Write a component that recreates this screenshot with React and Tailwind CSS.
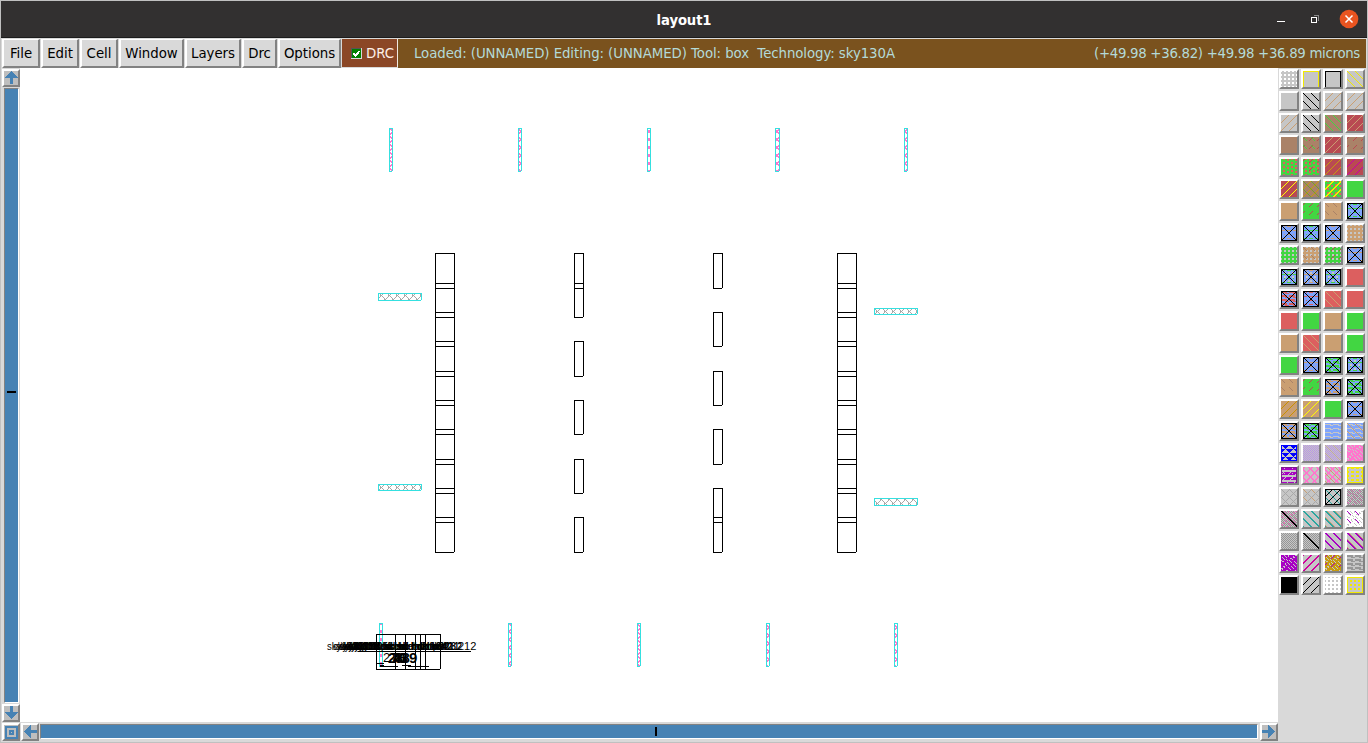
import React from "react";

const G = "#c6c6c6", GR = "#42d642", TAN = "#ca9f72", BR = "#aa8268", RD = "#b94a52", LR = "#dc5f5f", BL = "#7fa4fb", K = "#000", Y = "#f2ea00", W = "#fff", PK = "#ff76cd", PU = "#a800c4", TL = "#2aa7a0", DG = "#969696", MG = "#d0009c", BLU = "#0000ff", GO = "#c69a10";

// Stipple tests over a 16x16 swatch
const P = {
  frame: (x, y) => x < 1 || x > 14 || y < 1 || y > 14,
  open: (x, y) => y < 1 || x < 1 || x > 14,
  back: (x, y) => (x - y + 16) % 8 === 0,
  backC: (x, y) => (x - y + 16) % 8 === 2,
  backB: (x, y) => (x - y + 16) % 8 < 2,
  backDash: (x, y) => (x - y + 16) % 8 === 0 && y % 8 < 4,
  slash: (x, y) => (x + y) % 8 === 7,
  slashB: (x, y) => (x + y) % 8 === 7 || (x + y) % 8 === 0,
  slashDash: (x, y) => (x + y) % 8 === 1 && y % 8 < 4,
  dots: (x, y) => (x + 1) % 4 < 2 && (y + 1) % 4 < 2,
  sdots: (x, y) => x % 4 > 1 && (y + (x % 8 > 3 ? 0 : 1)) % 4 < 2,
  boxx: (x, y) => x < 1 || x > 14 || y < 1 || y > 14 || x === y || x + y === 15 || (x > 6 && x < 9 && y > 6 && y < 9),
  check: (x, y) => (x + y) % 2 === 0,
  wave: (x, y) => (y % 4 === 1 && x % 8 < 6) || (y % 4 === 2 && x % 8 > 4),
  speck: (x, y) => (y % 4 === 1 && x > 2 && x < 13 && x % 6 < 4) || (y % 8 === 5 && (x < 4 || x > 11)),
  waveB: (x, y) => (y % 4 < 2 && x % 8 < 6) || (y % 4 === 2 && x % 8 > 3),
  cross: (x, y) => (x - y + 16) % 8 === 0 || (x + y) % 8 === 0,
  crossB: (x, y) => (x - y + 19) % 8 < 2 || (x + y) % 8 < 2,
  tri: (x, y) => {
    if (y === 0 || y === 15 || x === 0 || x === 15) return true;
    const r = y % 8;
    return r < 4 ? Math.abs((x % 8) - 4) < 4 - r : Math.abs(((x + 4) % 8) - 4) < 8 - r;
  },
  scatter: (x, y) => ((x * 7) ^ (y * 5)) % 8 === 1 || (x * y + x) % 11 === 3,
  frameDots: (x, y) => x < 1 || x > 14 || y < 1 || y > 14 || ((x + 1) % 5 < 3 && y % 4 < 2),
  diag1: (x, y) => x === y || x === y + 1,
  bars: (x, y) => (y % 5 < 3 && !(x % 8 === 3 && y % 5 === 1)) && !(y > 4 && (x + y) % 7 === 0),
};

function pathOf(name) {
  let d = "";
  for (let y = 0; y < 16; y++) {
    let x = 0;
    while (x < 16) {
      if (!P[name](x, y)) { x++; continue; }
      const s = x;
      while (x < 16 && P[name](x, y)) x++;
      d += `M${s} ${y}h${x - s}v1h${s - x}z`;
    }
  }
  return d;
}
const PATHS = Object.fromEntries(Object.keys(P).map((k) => [k, pathOf(k)]));

// Each swatch: background followed by colour/stipple pairs
const cb = (...c) => [BL, ...c, K, "boxx"];
const SWATCHES = [
  [G, W, "dots"], [G, Y, "open"], [G, K, "open"], [G, Y, "back"],
  [G], [G, K, "back"], [G, TAN, "slash"], [G, TAN, "slash"],
  [G, TAN, "slash"], [G, K, "back"], [BR, GR, "back"], [RD, TAN, "slash"],
  [BR], [BR, GR, "backDash", RD, "slashDash"], [RD, TAN, "slash"], [BR, RD, "slashDash"],
  [GR, LR, "sdots"], [GR, LR, "sdots", RD, "slashDash"], [RD, GO, "slash"], [RD, "#c800a8", "slash"],
  [RD, "#ffff00", "slash"], [BR, GO, "slash", "#70a030", "back"], [GR, LR, "sdots", Y, "slashB"], [GR],
  [TAN], [GR, RD, "slashDash"], [TAN, BR, "backDash"], cb(GR, "speck"),
  cb(TAN, "speck"), cb(GR, "speck"), cb(TAN, "speck"), [TAN, G, "dots"],
  [GR, G, "dots"], [TAN, G, "dots", BR, "backDash"], [GR, G, "dots", RD, "slashDash"], cb(TAN, "speck"),
  cb(GR, "speck", G, "dots"), cb(TAN, "speck", G, "dots"), cb(GR, "speck", G, "dots"), [LR],
  cb(LR, "waveB"), cb(LR, "speck"), [LR, TAN, "back"], [LR],
  [LR], [GR], [TAN], [GR],
  [TAN], [LR, TAN, "back"], [TAN], [GR],
  [GR], cb(TAN, "speck"), cb(GR, "waveB"), cb(GR, "speck", G, "dots"),
  [TAN, BR, "backDash"], [GR, RD, "slashDash"], cb(TAN, "waveB"), cb(GR, "waveB"),
  [TAN, "#c99000", "slash"], [TAN, "#ffff00", "slash"], [GR], cb(TAN, "speck"),
  cb(TAN, "waveB"), cb(GR, "waveB"), [BL, G, "wave"], [BL, G, "wave", TAN, "back"],
  [G, BLU, "tri"], [G, "#b994e8", "check"], [G, "#b994e8", "check", "#c0a0a0", "back"], [PK, G, "scatter"],
  [G, PU, "bars", "#7d1c8f", "open"], [G, PK, "crossB"], [G, PK, "crossB", TAN, "backC"], [G, Y, "frameDots"],
  [G, "#a8a8a8", "cross"], [G, "#a8a8a8", "cross", TAN, "backDash"], [G, TL, "back", K, "slash", K, "frame"], [G, DG, "check", "#d080b0", "scatter"],
  [G, DG, "check", "#e078b8", "scatter", K, "diag1"], [G, TL, "backB"], [G, TL, "backB", TAN, "backC"], [W, G, "scatter", PU, "backDash"],
  [G, DG, "check"], [G, DG, "check", K, "diag1"], [G, PU, "backB"], [G, PU, "backB", TAN, "backC"],
  [PU, G, "scatter"], [G, MG, "slashB"], [GO, G, "scatter", PU, "slashDash"], [G, DG, "waveB"],
  [K], [G, K, "slash"], [W, G, "dots"], [G, Y, "frame", Y, "dots"],
];

function Swatch({ layers }) {
  const marks = [];
  for (let i = 1; i < layers.length; i += 2) marks.push([layers[i], layers[i + 1]]);
  return (
    <div className="h-5 w-5 border-2 border-t-white border-l-white border-r-[#828282] border-b-[#828282] bg-[#c6c6c6]">
      <svg width="16" height="16" viewBox="0 0 16 16" shapeRendering="crispEdges" className="block">
        <rect width="16" height="16" fill={layers[0]} />
        {marks.map(([c, p], i) => <path key={i} d={PATHS[p]} fill={c} />)}
      </svg>
    </div>
  );
}

const LINES = [283, 288, 312, 317, 341, 346, 371, 376, 400, 405, 429, 434, 459, 464, 488, 493, 517, 522];
const LEFT = [[253, 288], [283, 317], [341, 376], [400, 434], [459, 493], [517, 552]];
const RIGHT = [[253, 288], [312, 346], [371, 405], [429, 464], [488, 522], [517, 552]];
// One-pixel outline whose bottom-right corner pixel stays open
const box = (x1, y1, x2, y2) =>
  `M${x1} ${y1 + 0.5}H${x2 + 1}M${x2 + 0.5} ${y1}V${y2}M${x1} ${y2 + 0.5}H${x2}M${x1 + 0.5} ${y1}V${y2 + 1}`;

const wrap = (v) => Math.abs(((((v + 4) % 8) + 8) % 8) - 4);

function Pin({ x, y, w = 3 }) {
  let d = "";
  for (let i = 1; i < w; i++)
    for (let j = 1; j < 43; j++) {
      if (Math.abs(wrap(x + i - 0.5) - wrap(y + j - 3)) <= 0.5) d += `M${x + i} ${y + j}h1v1h-1z`;
    }
  return (
    <g>
      <path d={d} fill="#ff76cd" />
      <path d={box(x, y, x + w, y + 43)} fill="none" stroke="#35e0e0" />
    </g>
  );
}

function Strap({ x, y, h }) {
  let d = "";
  for (let i = 1; i < 43; i++)
    for (let j = 1; j < h; j++) {
      const a = wrap(x + i - 1), b = wrap(y + j - 3);
      const beside = wrap(x + i) === b && (b === 0 || b === 4);
      if (a === b || beside) d += `M${x + i} ${y + j}h1v1h-1z`;
    }
  return (
    <g>
      <path d={d} fill="#a8a8a8" />
      <path d={box(x, y, x + 43, y + h)} fill="none" stroke="#35e0e0" />
    </g>
  );
}

const LABELS = [
  [327, "sky130_fd_sc_hd__inv_1"], [333, "sky130_fd_pr__nfet_01v8"], [336, "sky130_fd_sc_hd__and2_2"],
  [339, "sky130_fd_sc_hd__dfxtp_4"], [342, "sky130_fd_sc_hd__nand2_1"], [345, "sky130_fd_sc_hd__mux2_1"],
  [348, "sky130_fd_sc_hd__buf_8"], [351, "sky130_fd_sc_hd__xor2_1"], [354, "sky130_fd_sc_hd__nor2_2"],
];

function Canvas() {
  return (
    <svg width="1258" height="654" viewBox="20 68 1258 654" shapeRendering="crispEdges" className="block">
      <Pin x={389} y={128} /><Pin x={518} y={128} /><Pin x={647} y={128} /><Pin x={775} y={128} w={4} /><Pin x={904} y={128} />
      <Pin x={379} y={623} /><Pin x={508} y={623} /><Pin x={637} y={623} /><Pin x={766} y={623} /><Pin x={894} y={623} />
      <Strap x={378} y={293} h={7} /><Strap x={378} y={484} h={6} />
      <Strap x={874} y={308} h={6} /><Strap x={874} y={498} h={7} />
      <g fill="none" stroke="#000">
        <path d={box(435, 253, 454, 552) + box(837, 253, 856, 552)} />
        <path d={LINES.map((y) => `M435 ${y + 0.5}H455M837 ${y + 0.5}H857`).join("")} />
        <path d={LEFT.map(([a, b]) => box(574, a, 583, b)).join("")} />
        <path d={RIGHT.map(([a, b]) => box(713, a, 722, b)).join("")} />
        <path d={box(376, 634, 440, 669)} />
        <path d="M395.500 634V669M405.500 634V669M415.500 634V669M420.500 634V669M425.500 634V669M358 651.500H471M377 663.500H384M380 665.500H384M380 666.500H398M402 665.500H411M408 666.500H429" />
      </g>
      <g fontFamily="Liberation Sans, sans-serif" fontSize="11" fill="#000">
        {LABELS.map(([x, t], i) => (
          <text key={x} x={x} y="650" fontWeight={i > 2 ? "bold" : "normal"} textLength="108" lengthAdjust="spacingAndGlyphs">{t}</text>
        ))}
      </g>
      <text x="458" y="650" fontFamily="Liberation Sans, sans-serif" fontSize="11" fill="#000">212</text>
      <g fontFamily="Liberation Sans, sans-serif" fontSize="14" fill="#000" fontWeight="bold">
        <text x="383" y="662" fontSize="13" fontWeight="normal">2</text>
        {[["2", 388], ["7", 391], ["4", 393], ["8", 395], ["6", 398], ["3", 400], ["8", 402]].map(([t, x]) => (
          <text key={x} x={x} y="663">{t}</text>
        ))}
        <text x="409" y="663" fontSize="15">9</text>
      </g>
    </svg>
  );
}

const ARROWS = {
  up: "M8.500 1L15 8H10V14H7V8H2Z",
  down: "M8.500 14L15 7H10V1H7V7H2Z",
  left: "M2 7.500L9 1V6H15V9H9V14Z",
  right: "M14 7.500L7 1V6H1V9H7V14Z",
};
function ScrollButton({ kind }) {
  return (
    <div className="h-[18px] w-[18px] shrink-0 border-2 border-t-white border-l-white border-r-[#828282] border-b-[#828282] bg-[#bebebe]">
      <svg width="14" height="14" viewBox="1 1 14 14" shapeRendering="crispEdges" className="block">
        {kind === "home" ? (
          <g fill="none" stroke="#4682b4" strokeWidth="2"><rect x="3" y="3" width="11" height="11" /><rect x="7" y="7" width="3" height="3" /></g>
        ) : <path d={ARROWS[kind]} fill="#4682b4" />}
      </svg>
    </div>
  );
}

const MENUS = [
  ["File", "w-[38px]"], ["Edit", "w-[38px]"], ["Cell", "w-[38px]"], ["Window", "w-[65px]"],
  ["Layers", "w-[56px]"], ["Drc", "w-[35px]"], ["Options", "w-[63px]"],
];

export default function App() {
  return (
    <div className="flex h-[743px] w-[1368px] flex-col overflow-hidden border border-[#c0c0c0] bg-[#d9d9d9] font-['DejaVu_Sans',sans-serif] text-[13.330px] text-black">
      <header className="grid h-[37px] shrink-0 grid-cols-[1fr_auto_1fr] items-center border-b border-[#1c1c1c] bg-[#323030]">
        <span />
        <h1 className="pt-[3px] text-[13.200px] tracking-[-0.100px] font-bold text-white">layout1</h1>
        <div className="flex items-center justify-end pr-[8px]">
          <svg width="84" height="20" viewBox="0 0 84 20">
            <g shapeRendering="crispEdges">
              <path d="M2 12H10V13H2Z" fill="#fff" />
              <path d="M38.500 6.500H43.500V12" fill="none" stroke="#8b8b8b" />
              <rect x="36.500" y="8.500" width="5" height="5" fill="none" stroke="#fff" />
            </g>
            <circle cx="74" cy="10" r="9.300" fill="#e95420" />
            <path d="M70.500 6.500L77.500 13.500M77.500 6.500L70.500 13.500" stroke="#fff" strokeWidth="1.500" />
          </svg>
        </div>
      </header>
      <nav className="flex h-[30px] shrink-0 pt-px pr-px pl-px">
        <div className="flex gap-px">
          {MENUS.map(([t, w]) => (
            <button key={t} className={`${w} flex h-[29px] items-center justify-center border-t border-r-2 border-b-2 border-l-2 border-t-white border-l-white border-r-[#828282] border-b-[#828282] bg-[#d9d9d9] pt-px tracking-[-0.040px]`}>{t}</button>
          ))}
        </div>
        <div className="ml-px flex h-[28px] w-[56px] items-center gap-[4px] border-r border-[#f0e8e0] bg-[#8b4726] pl-[9px] text-[#fdf0e8]">
          <svg width="11" height="11" viewBox="0 0 11 11" shapeRendering="crispEdges"><rect width="11" height="11" fill="#d9d9d9" /><rect width="10" height="10" fill="#555" /><rect x="1" y="1" width="9" height="9" fill="#008000" /><path d="M2.500 5L4.500 7.500L8.500 3" fill="none" stroke="#fff" strokeWidth="2" /></svg>
          <span className="pt-[2px]">DRC</span>
        </div>
        <div className="flex h-[29px] grow items-center justify-between bg-[#7a521e] pt-px pr-[6px] pl-[16px] text-[#b4dad8]">
          <span className="whitespace-pre tracking-[-0.075px]">Loaded: (UNNAMED) Editing: (UNNAMED) Tool: box  Technology: sky130A</span>
          <span className="tracking-[-0.310px]">(+49.98 +36.82) +49.98 +36.89 microns</span>
        </div>
      </nav>
      <div className="flex h-[674px] shrink-0">
        <div className="flex w-[1277px] flex-col">
          <div className="flex h-[654px]">
            <div className="flex w-[19px] flex-col items-center gap-px pt-px pl-px">
              <ScrollButton kind="up" />
              <div className="ml-px flex w-[15px] grow items-center justify-center border border-t-[#828282] border-l-[#828282] border-r-white border-b-white bg-[#4682b4]">
                <div className="mt-[-7px] mr-px h-[2px] w-[9px] bg-black" />
              </div>
              <ScrollButton kind="down" />
            </div>
            <main className="h-[654px] w-[1258px] bg-white"><Canvas /></main>
          </div>
          <div className="flex h-[20px] items-center gap-px pl-px">
            <ScrollButton kind="home" />
            <ScrollButton kind="left" />
            <div className="mr-px mb-px flex h-[15px] grow items-center justify-center border border-t-[#828282] border-l-[#828282] border-r-white border-b-white bg-[#4682b4]">
              <div className="mr-[-14px] h-[9px] w-[2px] bg-black" />
            </div>
            <ScrollButton kind="right" />
          </div>
        </div>
        <aside className="grid h-fit grid-cols-[repeat(4,20px)] gap-[2px] pt-px pl-px">
          {SWATCHES.map((s, i) => <Swatch key={i} layers={s} />)}
        </aside>
      </div>
    </div>
  );
}
